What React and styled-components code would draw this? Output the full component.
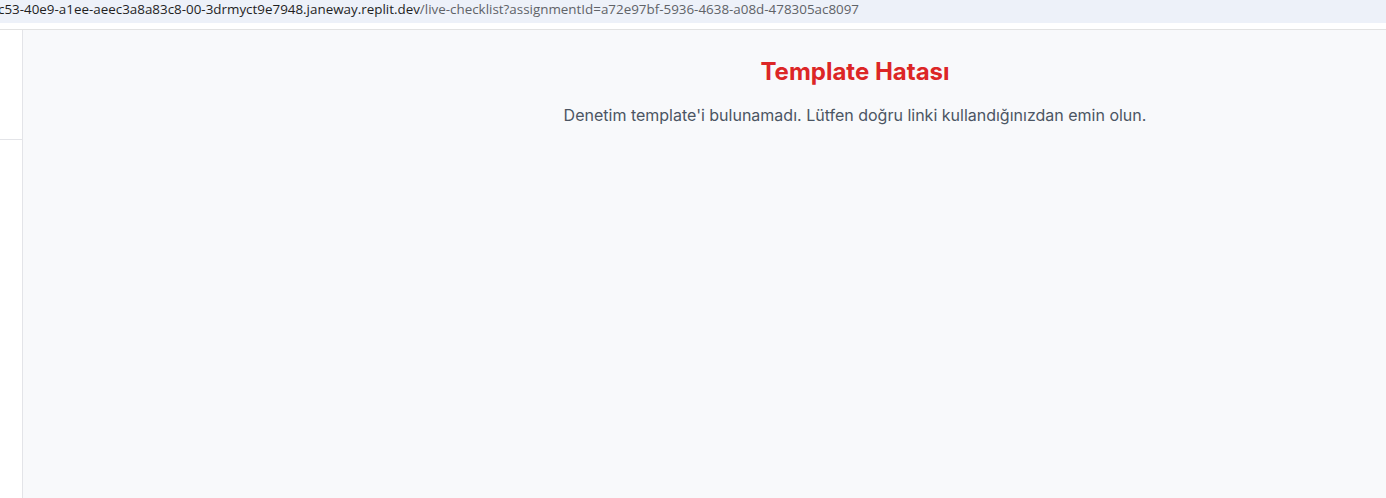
import React from "react";
import styled, { createGlobalStyle } from "styled-components";

const GlobalStyle = createGlobalStyle`
  html, body {
    margin: 0;
    padding: 0;
    overflow: hidden;
    background: #ffffff;
  }
  * { box-sizing: border-box; }
`;

const Page = styled.div`
  width: 1386px;
  height: 498px;
  display: flex;
  flex-direction: column;
  overflow: hidden;
`;

const UrlBar = styled.div`
  height: 23px;
  flex-shrink: 0;
  background: #edf1f9;
  display: flex;
  align-items: center;
  white-space: nowrap;
  overflow: hidden;
  font-family: "Open Sans", "Liberation Sans", sans-serif;
  font-size: 13.4px;
  padding-bottom: 6px;
  margin-left: -2px;
`;

const Host = styled.span`
  color: #1f1f1f;
`;

const Path = styled.span`
  color: #5f6368;
`;

const Gap = styled.div`
  height: 7px;
  flex-shrink: 0;
  background: #ffffff;
  border-bottom: 1px solid #e2e2e2;
`;

const Body = styled.div`
  flex: 1;
  display: flex;
  min-height: 0;
`;

const Sidebar = styled.aside`
  width: 23px;
  flex-shrink: 0;
  background: #ffffff;
  border-right: 1px solid #e3e4e8;
  display: flex;
  flex-direction: column;
`;

const SidebarHeader = styled.div`
  height: 110px;
  border-bottom: 1px solid #e3e4e8;
`;

const Main = styled.main`
  width: 1664px;
  flex-shrink: 0;
  background: #f8f9fb;
  display: flex;
  flex-direction: column;
  align-items: center;
  padding-top: 26px;
  font-family: Inter, "Noto Sans", sans-serif;
`;

const Title = styled.h1`
  margin: 0 0 15px;
  font-size: 24px;
  line-height: 32px;
  font-weight: 700;
  color: #dc2626;
`;

const Message = styled.p`
  margin: 0;
  font-size: 16px;
  line-height: 24px;
  color: #4b5563;
`;

export default function App() {
  return (
    <>
      <GlobalStyle />
      <Page>
        <UrlBar>
          <Host>c53-40e9-a1ee-aeec3a8a83c8-00-3drmyct9e7948.janeway.replit.dev</Host>
          <Path>/live-checklist?assignmentId=a72e97bf-5936-4638-a08d-478305ac8097</Path>
        </UrlBar>
        <Gap />
        <Body>
          <Sidebar>
            <SidebarHeader />
          </Sidebar>
          <Main>
            <Title>Template Hatası</Title>
            <Message>
              Denetim template'i bulunamadı. Lütfen doğru linki kullandığınızdan emin olun.
            </Message>
          </Main>
        </Body>
      </Page>
    </>
  );
}
